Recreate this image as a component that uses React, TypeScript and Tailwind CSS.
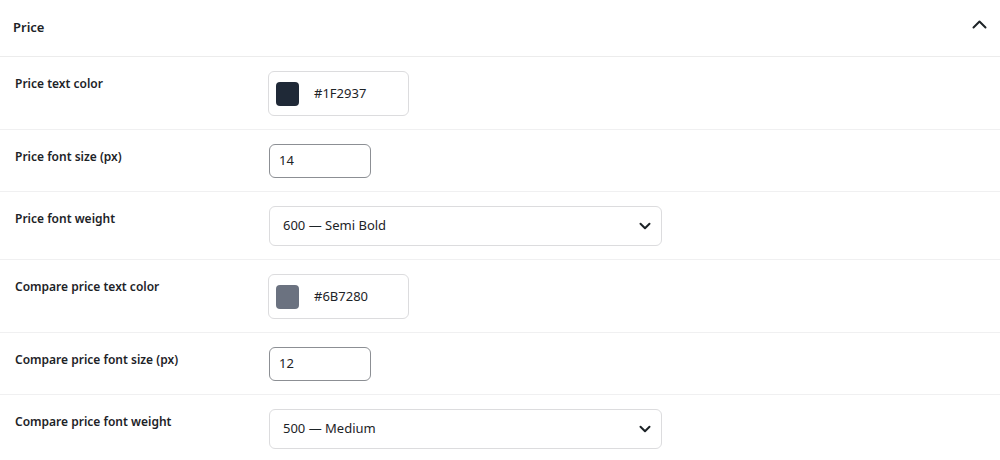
import React from "react";

type Row =
  | { label: string; kind: "color"; value: string }
  | { label: string; kind: "number"; value: string }
  | { label: string; kind: "select"; value: string };

const ROWS: Row[] = [
  { label: "Price text color", kind: "color", value: "#1F2937" },
  { label: "Price font size (px)", kind: "number", value: "14" },
  { label: "Price font weight", kind: "select", value: "600 \u2014 Semi Bold" },
  { label: "Compare price text color", kind: "color", value: "#6B7280" },
  { label: "Compare price font size (px)", kind: "number", value: "12" },
  { label: "Compare price font weight", kind: "select", value: "500 \u2014 Medium" },
];

function ColorField({ value }: { value: string }) {
  return (
    <div className="flex h-[45px] w-[141px] items-center rounded-[6px] border border-[#dcdcde] bg-white pl-[7px]">
      <span className="h-[24px] w-[23px] rounded-[4px]" style={{ backgroundColor: value }} />
      <span className="ml-[15px] text-[13px] text-[#1d2327]">{value}</span>
    </div>
  );
}

function NumberField({ value }: { value: string }) {
  return (
    <div className="ml-px flex h-[34px] w-[102px] items-center rounded-[6px] border border-[#8c8f94] bg-white pl-[9px] text-[13px] text-[#1d2327]">
      {value}
    </div>
  );
}

function SelectField({ value }: { value: string }) {
  return (
    <div className="ml-px flex h-[40px] w-[393px] items-center justify-between rounded-[6px] border border-[#dcdcde] bg-white pl-[13px] pr-[10px] text-[13px] text-[#1d2327]">
      <span>{value}</span>
      <svg width="12" height="8" viewBox="0 0 12 8" fill="none" stroke="#1d2327" strokeWidth="2" strokeLinecap="round" strokeLinejoin="round">
        <path d="M1.5 1.8 6 6.2l4.5-4.4" />
      </svg>
    </div>
  );
}

export default function App() {
  return (
    <div className="min-h-[460px] bg-white" style={{ fontFamily: '"Noto Sans", "Open Sans", sans-serif' }}>
      {/* panel header */}
      <div className="flex h-[57px] items-center justify-between border-b border-[#ececec] pl-[13px] pr-[13px]">
        <h2 className="text-[13px] font-semibold text-[#1d2327]">Price</h2>
        <svg className="mb-[8px]" width="15" height="9" viewBox="0 0 15 9" fill="none" stroke="#1d2327" strokeWidth="2" strokeLinecap="round" strokeLinejoin="round">
          <path d="M1.5 7.5 7.5 1.5l6 6" />
        </svg>
      </div>

      {ROWS.map((row) => (
        <div key={row.label} className="grid grid-cols-[268px_1fr] border-b border-[#f0f0f1] pt-[14px] pb-[13px] last:border-b-0">
          <div className="pl-[15px] pt-[4px] text-[12px] font-semibold leading-[18px] text-[#1d2327]">{row.label}</div>
          <div>
            {row.kind === "color" && <ColorField value={row.value} />}
            {row.kind === "number" && <NumberField value={row.value} />}
            {row.kind === "select" && <SelectField value={row.value} />}
          </div>
        </div>
      ))}
    </div>
  );
}
